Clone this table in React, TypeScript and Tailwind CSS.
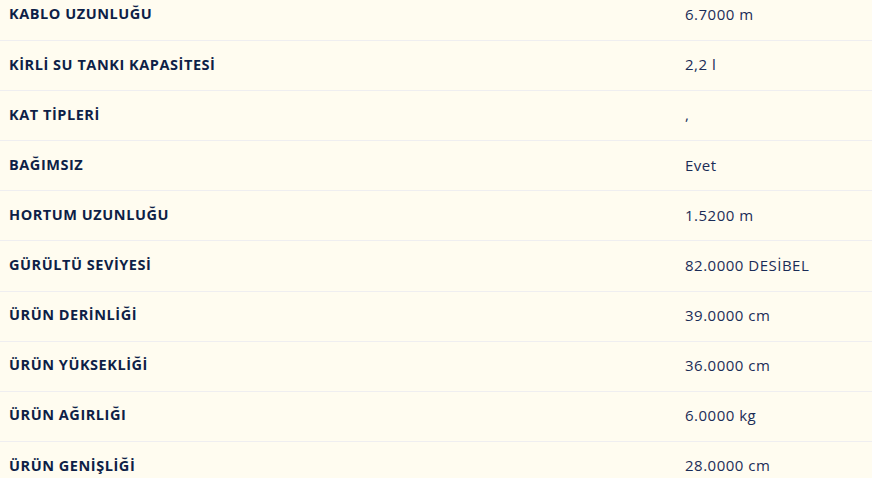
import React from 'react';

const specs = [
  { label: 'KABLO UZUNLUĞU', value: '6.7000 m' },
  { label: 'KİRLİ SU TANKI KAPASİTESİ', value: '2,2 l' },
  { label: 'KAT TİPLERİ', value: ',' },
  { label: 'BAĞIMSIZ', value: 'Evet' },
  { label: 'HORTUM UZUNLUĞU', value: '1.5200 m' },
  { label: 'GÜRÜLTÜ SEVİYESİ', value: '82.0000 DESİBEL' },
  { label: 'ÜRÜN DERİNLİĞİ', value: '39.0000 cm' },
  { label: 'ÜRÜN YÜKSEKLİĞİ', value: '36.0000 cm' },
  { label: 'ÜRÜN AĞIRLIĞI', value: '6.0000 kg' },
  { label: 'ÜRÜN GENİŞLİĞİ', value: '28.0000 cm' },
];

const App: React.FC = () => {
  return (
    <div
      className="w-[872px] h-[478px] overflow-hidden bg-[#fffcf0]"
      style={{ fontFamily: '"Open Sans", "Liberation Sans", sans-serif' }}
    >
      <div className="-mt-[10px]">
        {specs.map((item, index) => (
          <div
            key={index}
            className={`flex items-center h-[50.1px] pb-[2px] ${index > 0 ? 'border-t border-[#efeef0]' : ''}`}
          >
            <div className="w-[676px] pl-[9px] text-[14.5px] font-bold text-[#0e1f47] tracking-[0.55px]">
              {item.label}
            </div>
            <div className="pl-[9px] text-[15px] text-[#1b2c57] tracking-[0.5px]">{item.value}</div>
          </div>
        ))}
      </div>
    </div>
  );
};

export default App;
